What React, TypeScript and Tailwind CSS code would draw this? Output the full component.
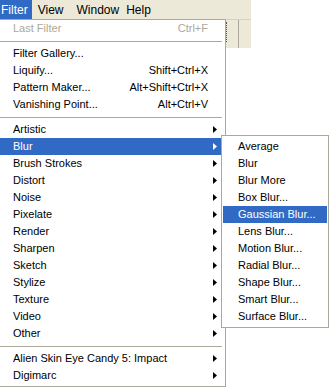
const font = { fontFamily: '"Liberation Sans", Arial, sans-serif' };

type Item =
  | { kind: "sep" }
  | { kind: "item"; label: string; shortcut?: string; sub?: boolean; active?: boolean; disabled?: boolean };

const items: Item[] = [
  { kind: "item", label: "Last Filter", shortcut: "Ctrl+F", disabled: true },
  { kind: "sep" },
  { kind: "item", label: "Filter Gallery..." },
  { kind: "item", label: "Liquify...", shortcut: "Shift+Ctrl+X" },
  { kind: "item", label: "Pattern Maker...", shortcut: "Alt+Shift+Ctrl+X" },
  { kind: "item", label: "Vanishing Point...", shortcut: "Alt+Ctrl+V" },
  { kind: "sep" },
  { kind: "item", label: "Artistic", sub: true },
  { kind: "item", label: "Blur", sub: true, active: true },
  { kind: "item", label: "Brush Strokes", sub: true },
  { kind: "item", label: "Distort", sub: true },
  { kind: "item", label: "Noise", sub: true },
  { kind: "item", label: "Pixelate", sub: true },
  { kind: "item", label: "Render", sub: true },
  { kind: "item", label: "Sharpen", sub: true },
  { kind: "item", label: "Sketch", sub: true },
  { kind: "item", label: "Stylize", sub: true },
  { kind: "item", label: "Texture", sub: true },
  { kind: "item", label: "Video", sub: true },
  { kind: "item", label: "Other", sub: true },
  { kind: "sep" },
  { kind: "item", label: "Alien Skin Eye Candy 5: Impact", sub: true },
  { kind: "item", label: "Digimarc", sub: true },
];

const blurItems = [
  "Average",
  "Blur",
  "Blur More",
  "Box Blur...",
  "Gaussian Blur...",
  "Lens Blur...",
  "Motion Blur...",
  "Radial Blur...",
  "Shape Blur...",
  "Smart Blur...",
  "Surface Blur...",
];

function Arrow({ white }: { white?: boolean }) {
  return (
    <svg width="4" height="7" viewBox="0 0 4 7" className="shrink-0">
      <path d="M0 0 L4 3.5 L0 7 Z" fill={white ? "#fff" : "#000"} />
    </svg>
  );
}

export default function App() {
  return (
    <div className="relative w-[330px] h-[389px] bg-white overflow-hidden text-[11px] text-black" style={font}>
      {/* menu bar */}
      <div className="flex w-[251px] h-[19px] bg-[#ece9d8] items-center text-[12px]">
        <div className="h-full flex items-center bg-[#316ac5] text-white pl-[1px] pr-[4px]">Filter</div>
        <div className="pl-[6px] pr-[7px]">View</div>
        <div className="pl-[6px] pr-[3px]">Window</div>
        <div className="pl-[4px]">Help</div>
      </div>

      <div className="flex">
        {/* filter menu */}
        <div className="w-[226px] border-t border-r border-b border-[#aca899] pb-[2px] bg-white">
          {items.map((it, i) =>
            it.kind === "sep" ? (
              <div key={i} className="h-[8px] flex items-center pr-[3px]">
                <div className="h-px w-full bg-[#aca899]" />
              </div>
            ) : (
              <div
                key={i}
                className={`h-[17px] flex items-center pl-[13px] pr-[8px] ${
                  it.active ? "bg-[#316ac5] text-white" : ""
                } ${it.disabled ? "text-[#aca899]" : ""}`}
              >
                <span className="flex-1 whitespace-nowrap">{it.label}</span>
                {it.shortcut && <span className="whitespace-nowrap pr-[9px]">{it.shortcut}</span>}
                {it.sub && <Arrow white={it.active} />}
              </div>
            )
          )}
        </div>

        {/* toolbar edge behind the menu */}
        <div className="w-[25px] h-[29px] bg-[#ece9d8] flex border-t border-[#d8d2bd]">
          <div className="w-px h-[20px] mt-[2px] border-l border-dotted border-[#555]" />
          <div className="w-[11px]" />
          <div className="w-px h-full bg-[#aca899]" />
        </div>
      </div>

      {/* blur submenu */}
      <div className="absolute left-[221px] top-[135px] w-[108px] border border-[#aca899] bg-white py-[2px] px-px">
        {blurItems.map((label) => (
          <div
            key={label}
            className={`h-[17px] flex items-center pl-[15px] whitespace-nowrap ${
              label === "Gaussian Blur..." ? "bg-[#316ac5] text-white" : ""
            }`}
          >
            {label}
          </div>
        ))}
      </div>
    </div>
  );
}
